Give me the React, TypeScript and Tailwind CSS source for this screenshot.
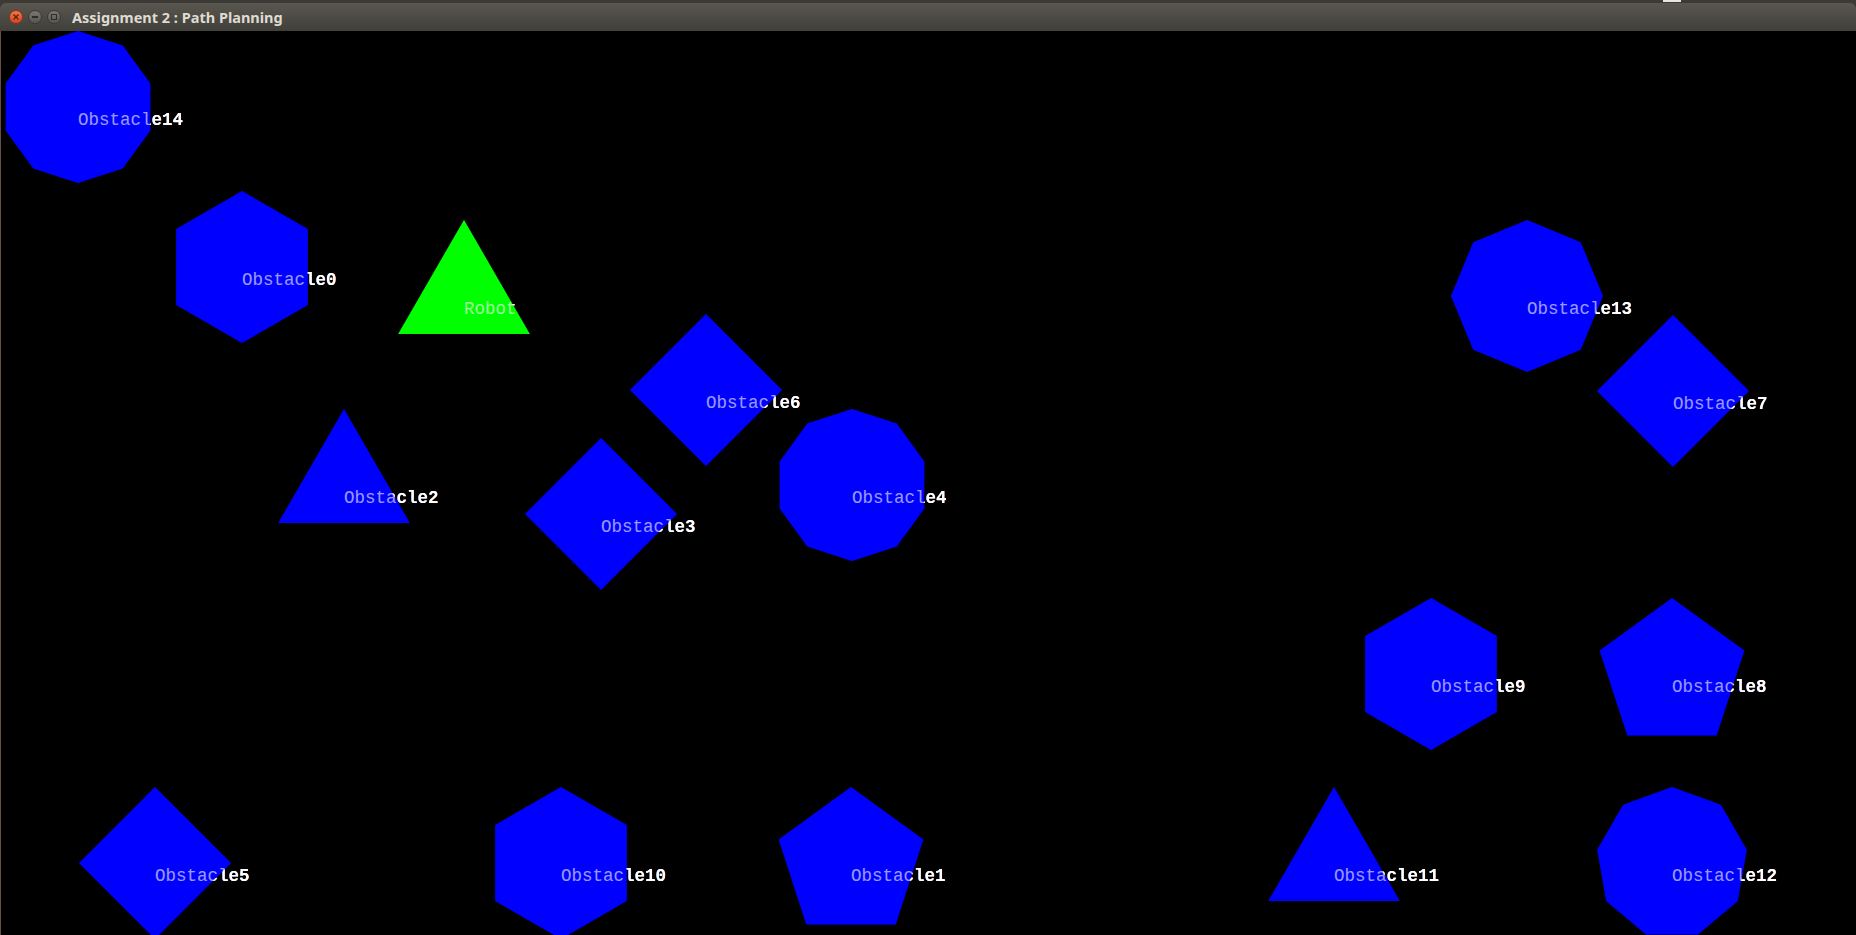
import React from "react";

type Shape = { sides: number; x: number; y: number; label: string; color: string };

const BLUE = "#0000ff";
const GREEN = "#00ff00";

const shapes: Shape[] = [
  { sides: 10, x: 78, y: 107, label: "Obstacle14", color: BLUE },
  { sides: 6, x: 242, y: 267, label: "Obstacle0", color: BLUE },
  { sides: 3, x: 464, y: 296, label: "Robot", color: GREEN },
  { sides: 4, x: 706, y: 390, label: "Obstacle6", color: BLUE },
  { sides: 3, x: 344, y: 485, label: "Obstacle2", color: BLUE },
  { sides: 4, x: 601, y: 514, label: "Obstacle3", color: BLUE },
  { sides: 10, x: 852, y: 485, label: "Obstacle4", color: BLUE },
  { sides: 8, x: 1527, y: 296, label: "Obstacle13", color: BLUE },
  { sides: 4, x: 1673, y: 391, label: "Obstacle7", color: BLUE },
  { sides: 6, x: 1431, y: 674, label: "Obstacle9", color: BLUE },
  { sides: 5, x: 1672, y: 674, label: "Obstacle8", color: BLUE },
  { sides: 4, x: 155, y: 863, label: "Obstacle5", color: BLUE },
  { sides: 6, x: 561, y: 863, label: "Obstacle10", color: BLUE },
  { sides: 5, x: 851, y: 863, label: "Obstacle1", color: BLUE },
  { sides: 3, x: 1334, y: 863, label: "Obstacle11", color: BLUE },
  { sides: 9, x: 1672, y: 863, label: "Obstacle12", color: BLUE },
];

// regular polygon, one vertex pointing up
function points(s: Shape, r = 76) {
  const pts: string[] = [];
  for (let k = 0; k < s.sides; k++) {
    const a = -Math.PI / 2 + (k * 2 * Math.PI) / s.sides;
    pts.push(`${(s.x + r * Math.cos(a)).toFixed(1)},${(s.y + r * Math.sin(a)).toFixed(1)}`);
  }
  return pts.join(" ");
}

function WindowButton({ kind }: { kind: "close" | "min" | "max" }) {
  if (kind === "close") {
    return (
      <div className="w-[14px] h-[14px] rounded-full bg-gradient-to-b from-[#f5764a] to-[#d2481f] border border-[#8e3417] flex items-center justify-center">
        <svg width="6" height="6" viewBox="0 0 6 6">
          <path d="M0.5 0.5 L5.5 5.5 M5.5 0.5 L0.5 5.5" stroke="#5a1d0b" strokeWidth="1.2" />
        </svg>
      </div>
    );
  }
  return (
    <div className="w-[14px] h-[14px] rounded-full bg-gradient-to-b from-[#7a776f] to-[#58564f] border border-[#3a3935] flex items-center justify-center">
      {kind === "min" ? (
        <div className="w-[6px] h-[1.5px] bg-[#2e2d2a]" />
      ) : (
        <div className="w-[6px] h-[6px] border border-[#2e2d2a]" />
      )}
    </div>
  );
}

export default function App() {
  return (
    <div className="w-[1856px] h-[935px] bg-[#3b3a36] flex flex-col overflow-hidden relative">
      <div className="absolute top-0 left-[1663px] w-[18px] h-[2px] bg-[#e8e6e0]" />
      <div className="mt-[3px] h-[28px] shrink-0 rounded-t-[6px] bg-gradient-to-b from-[#5a574f] to-[#403f3a] flex items-center pl-[9px] gap-[5px]">
        <WindowButton kind="close" />
        <WindowButton kind="min" />
        <WindowButton kind="max" />
        <span className="ml-[6px] text-[14.5px] font-bold text-[#dfdbd2] font-['Noto_Sans',sans-serif] leading-none">
          Assignment 2 : Path Planning
        </span>
      </div>
      <div className="flex-1 bg-black border-l border-[#6a4a42]">
        <svg
          width="1855"
          height="904"
          viewBox="1 31 1855 904"
          className="block font-['Liberation_Mono',monospace] text-[17.5px]"
        >
          <defs>
            {shapes.map((s, i) => (
              <mask key={i} id={`out${i}`} maskUnits="userSpaceOnUse" x="0" y="0" width="1856" height="935">
                <rect x="0" y="0" width="1856" height="935" fill="#fff" />
                <polygon points={points(s)} fill="#000" />
              </mask>
            ))}
          </defs>
          {shapes.map((s, i) => (
            <g key={s.label}>
              <polygon points={points(s)} fill={s.color} />
              <text x={s.x} y={s.y + 18} fill="#ffffff">
                {s.label}
              </text>
              <polygon points={points(s)} fill={s.color} fillOpacity={0.4} />
              <text x={s.x} y={s.y + 18} fill="#ffffff" fontWeight="bold" mask={`url(#out${i})`}>
                {s.label}
              </text>
            </g>
          ))}
        </svg>
      </div>
    </div>
  );
}
